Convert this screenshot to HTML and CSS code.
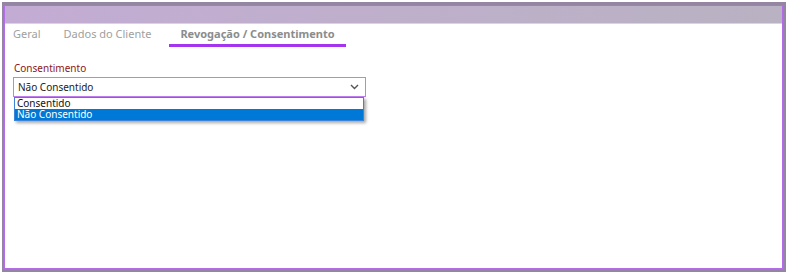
FILE: index.html
```html
<!DOCTYPE html>
<html lang="pt-BR">
<head>
  <meta charset="UTF-8">
  <title>Revogação / Consentimento</title>
  <link rel="stylesheet" href="styles.css">
</head>
<body>
  <div class="frame">
    <div class="title-bar"></div>

    <div class="tabs">
      <div class="tab">Geral</div>
      <div class="tab">Dados do Cliente</div>
      <div class="tab active">Revogação / Consentimento</div>
    </div>

    <div class="form">
      <label class="field-label">Consentimento</label>
      <div class="select">
        <span>Não Consentido</span>
        <svg class="chevron" width="9" height="6" viewBox="0 0 9 6">
          <path d="M1 1 L4.5 4.5 L8 1" fill="none" stroke="#555" stroke-width="1.4"/>
        </svg>
        <div class="options">
          <div class="option">Consentido</div>
          <div class="option selected">Não Consentido</div>
        </div>
      </div>
    </div>
  </div>
</body>
</html>
```

FILE: styles.css
```css
body {
  margin: 0;
  background-color: #fff;
  font-family: 'Noto Sans', 'Open Sans', sans-serif;
}

.frame {
  margin: 2px 1px 0 2px;
  height: 262px;
  border: 3px solid #9485a3;
  border-left-width: 2px;
  box-shadow: inset 0 0 0 1px #b36de6;
  background-color: #fff;
  padding: 1px;
}

.title-bar {
  height: 17px;
  background: linear-gradient(90deg, #c3acd4, #b9b2c2);
  border-bottom: 1px solid #dcd3e2;
}

.tabs {
  display: flex;
  gap: 18px;
  padding: 2px 0 0 8px;
  height: 21px;
}

.tab {
  font-size: 11px;
  color: #a0a0a0;
  line-height: 16px;
}

.tab:first-child {
  margin-right: 5px;
}

.tab.active {
  font-weight: bold;
  color: #8c8c8c;
  padding: 0 11px 2px;
  height: 16px;
  border-bottom: 3px solid #a534ef;
}

.form {
  padding: 14px 0 0 8px;
}

.field-label {
  display: block;
  font-size: 10px;
  color: #8e1616;
  line-height: 14px;
  margin-left: 1px;
}

.select {
  position: relative;
  box-sizing: border-box;
  width: 353px;
  height: 20px;
  margin-top: 2px;
  border: 1px solid #c27ef2;
  display: flex;
  align-items: center;
  justify-content: space-between;
  padding: 0 6px 0 4px;
  font-size: 10px;
  color: #222;
}

.chevron {
  margin-top: -1px;
}

.options {
  position: absolute;
  box-sizing: border-box;
  top: 19px;
  left: 0;
  width: 350px;
  border: 1px solid #3d83d6;
  background-color: #fff;
  box-shadow: 2px 2px 3px rgba(0, 0, 0, 0.35);
}

.option {
  font-size: 10px;
  line-height: 11px;
  padding: 0 2px;
  color: #111;
}

.option.selected {
  background-color: #0078d7;
  color: #fff;
}
```
